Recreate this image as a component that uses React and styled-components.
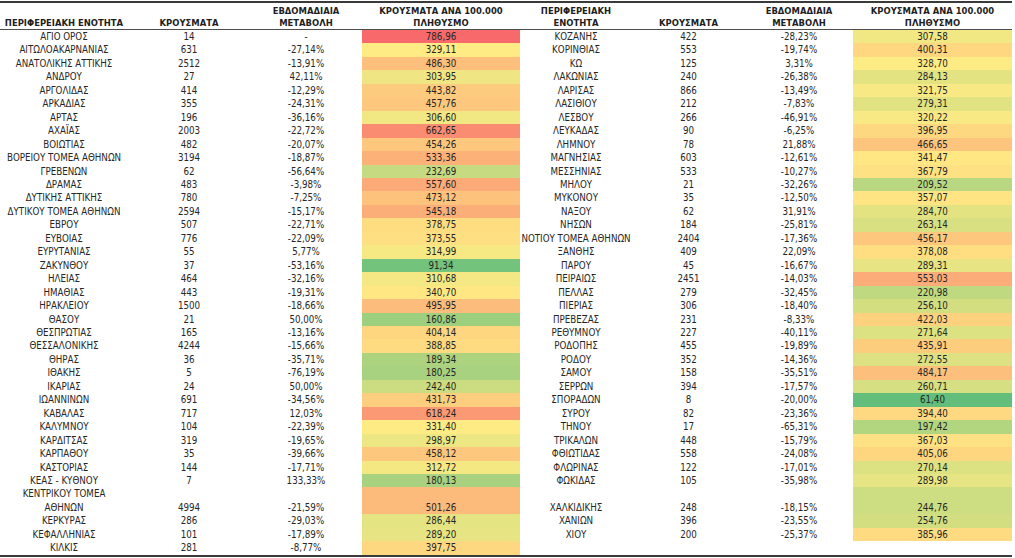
import React from "react";
import styled, { createGlobalStyle } from "styled-components";

const GlobalStyle = createGlobalStyle`
  html, body {
    margin: 0;
    padding: 0;
    background: #fff;
  }
`;

const COLS = "128px 122px 112px 158px 112px 113px 108px 159px";
const ROW_H = 13.46;

const leftRows = [
  ["ΑΓΙΟ ΟΡΟΣ", "14", "-", "786,96"],
  ["ΑΙΤΩΛΟΑΚΑΡΝΑΝΙΑΣ", "631", "-27,14%", "329,11"],
  ["ΑΝΑΤΟΛΙΚΗΣ ΑΤΤΙΚΗΣ", "2512", "-13,91%", "486,30"],
  ["ΑΝΔΡΟΥ", "27", "42,11%", "303,95"],
  ["ΑΡΓΟΛΙΔΑΣ", "414", "-12,29%", "443,82"],
  ["ΑΡΚΑΔΙΑΣ", "355", "-24,31%", "457,76"],
  ["ΑΡΤΑΣ", "196", "-36,16%", "306,60"],
  ["ΑΧΑΪΑΣ", "2003", "-22,72%", "662,65"],
  ["ΒΟΙΩΤΙΑΣ", "482", "-20,07%", "454,26"],
  ["ΒΟΡΕΙΟΥ ΤΟΜΕΑ ΑΘΗΝΩΝ", "3194", "-18,87%", "533,36"],
  ["ΓΡΕΒΕΝΩΝ", "62", "-56,64%", "232,69"],
  ["ΔΡΑΜΑΣ", "483", "-3,98%", "557,60"],
  ["ΔΥΤΙΚΗΣ ΑΤΤΙΚΗΣ", "780", "-7,25%", "473,12"],
  ["ΔΥΤΙΚΟΥ ΤΟΜΕΑ ΑΘΗΝΩΝ", "2594", "-15,17%", "545,18"],
  ["ΕΒΡΟΥ", "507", "-22,71%", "378,75"],
  ["ΕΥΒΟΙΑΣ", "776", "-22,09%", "373,55"],
  ["ΕΥΡΥΤΑΝΙΑΣ", "55", "5,77%", "314,99"],
  ["ΖΑΚΥΝΘΟΥ", "37", "-53,16%", "91,34"],
  ["ΗΛΕΙΑΣ", "464", "-32,16%", "310,68"],
  ["ΗΜΑΘΙΑΣ", "443", "-19,31%", "340,70"],
  ["ΗΡΑΚΛΕΙΟΥ", "1500", "-18,66%", "495,95"],
  ["ΘΑΣΟΥ", "21", "50,00%", "160,86"],
  ["ΘΕΣΠΡΩΤΙΑΣ", "165", "-13,16%", "404,14"],
  ["ΘΕΣΣΑΛΟΝΙΚΗΣ", "4244", "-15,66%", "388,85"],
  ["ΘΗΡΑΣ", "36", "-35,71%", "189,34"],
  ["ΙΘΑΚΗΣ", "5", "-76,19%", "180,25"],
  ["ΙΚΑΡΙΑΣ", "24", "50,00%", "242,40"],
  ["ΙΩΑΝΝΙΝΩΝ", "691", "-34,56%", "431,73"],
  ["ΚΑΒΑΛΑΣ", "717", "12,03%", "618,24"],
  ["ΚΑΛΥΜΝΟΥ", "104", "-22,39%", "331,40"],
  ["ΚΑΡΔΙΤΣΑΣ", "319", "-19,65%", "298,97"],
  ["ΚΑΡΠΑΘΟΥ", "35", "-39,66%", "458,12"],
  ["ΚΑΣΤΟΡΙΑΣ", "144", "-17,71%", "312,72"],
  ["ΚΕΑΣ - ΚΥΘΝΟΥ", "7", "133,33%", "180,13"],
  ["ΚΕΝΤΡΙΚΟΥ ΤΟΜΕΑ\nΑΘΗΝΩΝ", "4994", "-21,59%", "501,26"],
  ["ΚΕΡΚΥΡΑΣ", "286", "-29,03%", "286,44"],
  ["ΚΕΦΑΛΛΗΝΙΑΣ", "101", "-17,89%", "289,20"],
  ["ΚΙΛΚΙΣ", "281", "-8,77%", "397,75"],
];

const rightRows = [
  ["ΚΟΖΑΝΗΣ", "422", "-28,23%", "307,58"],
  ["ΚΟΡΙΝΘΙΑΣ", "553", "-19,74%", "400,31"],
  ["ΚΩ", "125", "3,31%", "328,70"],
  ["ΛΑΚΩΝΙΑΣ", "240", "-26,38%", "284,13"],
  ["ΛΑΡΙΣΑΣ", "866", "-13,49%", "321,75"],
  ["ΛΑΣΙΘΙΟΥ", "212", "-7,83%", "279,31"],
  ["ΛΕΣΒΟΥ", "266", "-46,91%", "320,22"],
  ["ΛΕΥΚΑΔΑΣ", "90", "-6,25%", "396,95"],
  ["ΛΗΜΝΟΥ", "78", "21,88%", "466,65"],
  ["ΜΑΓΝΗΣΙΑΣ", "603", "-12,61%", "341,47"],
  ["ΜΕΣΣΗΝΙΑΣ", "533", "-10,27%", "367,79"],
  ["ΜΗΛΟΥ", "21", "-32,26%", "209,52"],
  ["ΜΥΚΟΝΟΥ", "35", "-12,50%", "357,07"],
  ["ΝΑΞΟΥ", "62", "31,91%", "284,70"],
  ["ΝΗΣΩΝ", "184", "-25,81%", "263,14"],
  ["ΝΟΤΙΟΥ ΤΟΜΕΑ ΑΘΗΝΩΝ", "2404", "-17,36%", "456,17"],
  ["ΞΑΝΘΗΣ", "409", "22,09%", "378,08"],
  ["ΠΑΡΟΥ", "45", "-16,67%", "289,31"],
  ["ΠΕΙΡΑΙΩΣ", "2451", "-14,03%", "553,03"],
  ["ΠΕΛΛΑΣ", "279", "-32,45%", "220,98"],
  ["ΠΙΕΡΙΑΣ", "306", "-18,40%", "256,10"],
  ["ΠΡΕΒΕΖΑΣ", "231", "-8,33%", "422,03"],
  ["ΡΕΘΥΜΝΟΥ", "227", "-40,11%", "271,64"],
  ["ΡΟΔΟΠΗΣ", "455", "-19,89%", "435,91"],
  ["ΡΟΔΟΥ", "352", "-14,36%", "272,55"],
  ["ΣΑΜΟΥ", "158", "-35,51%", "484,17"],
  ["ΣΕΡΡΩΝ", "394", "-17,57%", "260,71"],
  ["ΣΠΟΡΑΔΩΝ", "8", "-20,00%", "61,40"],
  ["ΣΥΡΟΥ", "82", "-23,36%", "394,40"],
  ["ΤΗΝΟΥ", "17", "-65,31%", "197,42"],
  ["ΤΡΙΚΑΛΩΝ", "448", "-15,79%", "367,03"],
  ["ΦΘΙΩΤΙΔΑΣ", "558", "-24,08%", "405,06"],
  ["ΦΛΩΡΙΝΑΣ", "122", "-17,01%", "270,14"],
  ["ΦΩΚΙΔΑΣ", "105", "-35,98%", "289,98"],
  ["ΧΑΛΚΙΔΙΚΗΣ", "248", "-18,15%", "244,76"],
  ["ΧΑΝΙΩΝ", "396", "-23,55%", "254,76"],
  ["ΧΙΟΥ", "200", "-25,37%", "385,96"],
];

const headers = [
  "ΠΕΡΙΦΕΡΕΙΑΚΗ ΕΝΟΤΗΤΑ",
  "ΚΡΟΥΣΜΑΤΑ",
  "ΕΒΔΟΜΑΔΙΑΙΑ\nΜΕΤΑΒΟΛΗ",
  "ΚΡΟΥΣΜΑΤΑ ΑΝΑ 100.000\nΠΛΗΘΥΣΜΟ",
  "ΠΕΡΙΦΕΡΕΙΑΚΗ\nΕΝΟΤΗΤΑ",
  "ΚΡΟΥΣΜΑΤΑ",
  "ΕΒΔΟΜΑΔΙΑΙΑ\nΜΕΤΑΒΟΛΗ",
  "ΚΡΟΥΣΜΑΤΑ ΑΝΑ 100.000\nΠΛΗΘΥΣΜΟ",
];

// excel style 3 colour scale: min green, 50th percentile yellow, max red
const GREEN = [99, 190, 123];
const YELLOW = [255, 235, 132];
const RED = [248, 105, 107];

const allValues = [...leftRows, ...rightRows].map((r) => parseFloat(r[3].replace(",", ".")));
const sorted = [...allValues].sort((a, b) => a - b);
const MIN = sorted[0];
const MAX = sorted[sorted.length - 1];
const MID = sorted[Math.floor(sorted.length / 2)];

const mix = (a, b, t) => a.map((c, i) => Math.round(c + (b[i] - c) * t));

function scaleColor(text) {
  const v = parseFloat(text.replace(",", "."));
  const rgb = v <= MID ? mix(GREEN, YELLOW, (v - MIN) / (MID - MIN)) : mix(YELLOW, RED, (v - MID) / (MAX - MID));
  return `rgb(${rgb.join(",")})`;
}

const rows = leftRows.map((l, i) => ({
  left: l,
  right: rightRows[i] || null,
  tall: l[0].includes("\n"),
}));

function App() {
  return (
    <>
      <GlobalStyle />
      <Sheet>
        <HeaderRow>
          {headers.map((h, i) => (
            <HeadCell key={i}>{h}</HeadCell>
          ))}
        </HeaderRow>
        {rows.map((r, i) => (
          <Row key={i} $tall={r.tall}>
            <Cell>{r.left[0]}</Cell>
            <Cell>{r.left[1]}</Cell>
            <Cell>{r.left[2]}</Cell>
            <Cell $bg={scaleColor(r.left[3])}>{r.left[3]}</Cell>
            {r.right ? (
              <>
                <Cell>{r.right[0]}</Cell>
                <Cell>{r.right[1]}</Cell>
                <Cell>{r.right[2]}</Cell>
                <Cell $bg={scaleColor(r.right[3])}>{r.right[3]}</Cell>
              </>
            ) : (
              <>
                <Cell />
                <Cell />
                <Cell />
                <Cell />
              </>
            )}
          </Row>
        ))}
      </Sheet>
    </>
  );
}

const Sheet = styled.div`
  width: 1012px;
  margin-top: 1px;
  border-top: 2px solid #3a3a3a;
  border-bottom: 2px solid #3a3a3a;
  font-family: "DejaVu Sans Condensed", "DejaVu Sans", "Liberation Sans", sans-serif;
  font-stretch: condensed;
  color: #262626;
`;

const HeaderRow = styled.div`
  display: grid;
  grid-template-columns: ${COLS};
  height: 26px;
  border-bottom: 1px solid #4d4d4d;
`;

const HeadCell = styled.div`
  display: flex;
  align-items: flex-end;
  justify-content: center;
  text-align: center;
  white-space: pre;
  font-size: 9.4px;
  font-weight: bold;
  line-height: 12px;
  color: #1e1e1e;
`;

const Row = styled.div`
  display: grid;
  grid-template-columns: ${COLS};
  height: ${(p) => (p.$tall ? ROW_H * 2 : ROW_H)}px;
`;

const Cell = styled.div`
  display: flex;
  align-items: flex-end;
  justify-content: center;
  text-align: center;
  white-space: pre;
  font-size: 9.7px;
  line-height: ${ROW_H}px;
  background: ${(p) => p.$bg || "transparent"};
`;

export default App;
